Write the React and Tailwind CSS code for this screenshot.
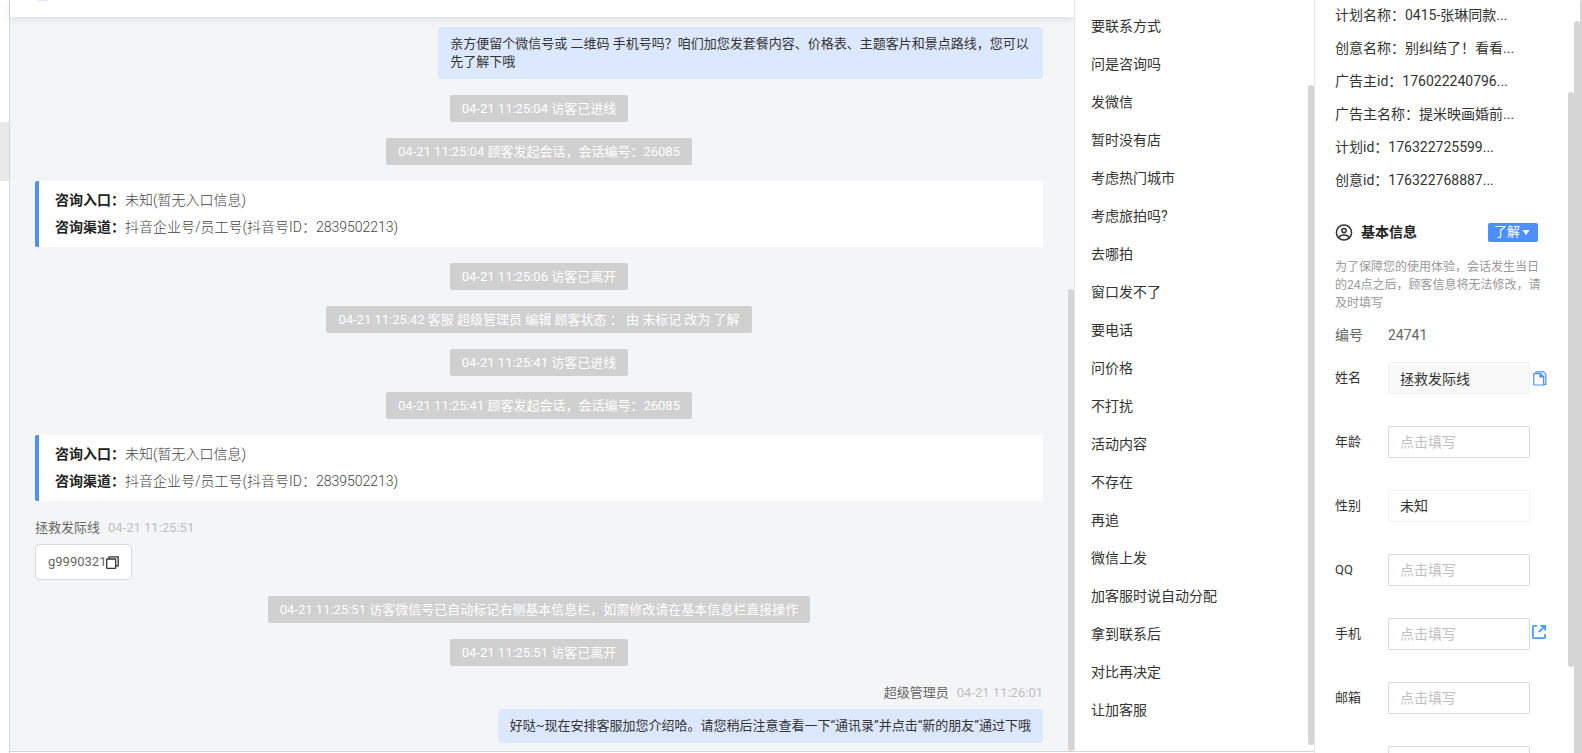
import React, { useState } from "react"

const messages = [
  {
    type: "reply",
    text: "亲方便留个微信号或 二维码 手机号吗？咱们加您发套餐内容、价格表、主题客片和景点路线，您可以先了解下哦",
  },
  { type: "system", text: "04-21 11:25:04 访客已进线" },
  { type: "system", text: "04-21 11:25:04 顾客发起会话，会话编号：26085" },
  { type: "source" },
  { type: "system", text: "04-21 11:25:06 访客已离开" },
  { type: "system", text: "04-21 11:25:42 客服 超级管理员 编辑 顾客状态 ： 由 未标记 改为 了解" },
  { type: "system", text: "04-21 11:25:41 访客已进线" },
  { type: "system", text: "04-21 11:25:41 顾客发起会话，会话编号：26085" },
  { type: "source" },
  { type: "visitor", name: "拯救发际线", time: "04-21 11:25:51", text: "g9990321" },
  {
    type: "system",
    text: "04-21 11:25:51 访客微信号已自动标记右侧基本信息栏，如需修改请在基本信息栏直接操作",
  },
  { type: "system", text: "04-21 11:25:51 访客已离开" },
  {
    type: "reply",
    name: "超级管理员",
    time: "04-21 11:26:01",
    text: "好哒~现在安排客服加您介绍哈。请您稍后注意查看一下“通讯录”并点击“新的朋友”通过下哦",
  },
]

const quickReplies = [
  "要联系方式",
  "问是咨询吗",
  "发微信",
  "暂时没有店",
  "考虑热门城市",
  "考虑旅拍吗?",
  "去哪拍",
  "窗口发不了",
  "要电话",
  "问价格",
  "不打扰",
  "活动内容",
  "不存在",
  "再追",
  "微信上发",
  "加客服时说自动分配",
  "拿到联系后",
  "对比再决定",
  "让加客服",
]

const adInfo = [
  ["计划名称", "0415-张琳同款..."],
  ["创意名称", "别纠结了！看看..."],
  ["广告主id", "176022240796..."],
  ["广告主名称", "提米映画婚前..."],
  ["计划id", "176322725599..."],
  ["创意id", "176322768887..."],
]

const fields = [
  { id: "name", label: "姓名", value: "拯救发际线", readOnly: true, action: "copy" },
  { id: "age", label: "年龄" },
  { id: "gender", label: "性别", options: ["未知", "男", "女"] },
  { id: "qq", label: "QQ" },
  { id: "phone", label: "手机", action: "open" },
  { id: "email", label: "邮箱" },
]

const CopyIcon = () => (
  <svg width="13" height="13" viewBox="0 0 13 13" fill="none" stroke="#333" strokeWidth="1.3">
    <rect x="0.7" y="3" width="9" height="9.3" rx="0.6" />
    <path d="M3 3V0.8h9.2v9H9.7" />
  </svg>
)

const DocCopyIcon = () => (
  <svg width="14" height="15" viewBox="0 0 14 15" fill="none" stroke="#4e8fff" strokeWidth="1.2">
    <path d="M0.8 2.6h6.4l3.4 3.2v8.2H0.8z" />
    <path d="M7 2.6v3.4h3.6z" fill="#4e8fff" />
    <path d="M3 2.4V0.8h7.4l2.4 2.4v10.2h-2.2" />
  </svg>
)

const OpenIcon = () => (
  <svg width="14" height="14" viewBox="0 0 14 14" fill="none" stroke="#409eff" strokeWidth="1.8">
    <path d="M5 0.9H1.9a1 1 0 0 0-1 1v10.2a1 1 0 0 0 1 1h10.2a1 1 0 0 0 1-1V9" />
    <path d="M8.5 0.9h4.6v4.6M13 1L6.8 7.2" />
  </svg>
)

const UserIcon = () => (
  <svg width="18" height="17" viewBox="0 0 18 17" fill="none" stroke="#333" strokeWidth="1.5">
    <circle cx="9" cy="8.5" r="7.6" />
    <circle cx="9" cy="6.6" r="2.1" />
    <path d="M3.8 13.6c1-1.9 2.9-2.5 5.2-2.5s4.2.6 5.2 2.5" />
  </svg>
)

const SystemMessage = ({ text }) => (
  <p className="self-center rounded-xs bg-[#d0d0d0] px-3 text-[13px] leading-[27px] text-white">{text}</p>
)

const SourceCard = () => (
  <div className="rounded-xs border-l-4 border-[#4e8fff] bg-white px-4 py-1.5 text-sm leading-[27px] text-[#444]">
    <p>
      <b className="font-bold text-[#222]">咨询入口：</b>
      <span className="font-light">未知(暂无入口信息)</span>
    </p>
    <p>
      <b className="font-bold text-[#222]">咨询渠道：</b>
      <span className="font-light">抖音企业号/员工号(抖音号ID：2839502213)</span>
    </p>
  </div>
)

const Sender = ({ name, time }) => (
  <p className="mb-[5px] flex gap-2 text-[13px] leading-[22px]">
    <span className="text-[#666]">{name}</span>
    <time className="text-[#bfbfbf]">{time}</time>
  </p>
)

const Message = ({ message }) => {
  if (message.type === "system") return <SystemMessage text={message.text} />
  if (message.type === "source") return <SourceCard />
  if (message.type === "visitor") {
    return (
      <div className="flex flex-col items-start">
        <Sender name={message.name} time={message.time} />
        <div className="flex items-center rounded border border-[#d9d9d9] bg-white px-3 py-2 text-[13px] leading-[18px] text-[#666]">
          {message.text}
          <button type="button" aria-label="复制">
            <CopyIcon />
          </button>
        </div>
      </div>
    )
  }
  return (
    <div className="flex flex-col items-end">
      {message.name && <Sender name={message.name} time={message.time} />}
      <p className="max-w-3/5 rounded bg-[#dce8ff] px-3 py-2 text-[13px] leading-[18px] text-[#333]">{message.text}</p>
    </div>
  )
}

const Field = ({ field }) => {
  const [value, setValue] = useState(field.value || "")
  return (
    <div className="flex items-center">
      <label htmlFor={field.id} className="w-[53px] shrink-0 text-[13px] text-[#333]">
        {field.label}
      </label>
      {field.options ? (
        <select
          id={field.id}
          className="h-8 w-[142px] appearance-none rounded-xs border border-[#f2f2f2] bg-white px-[11px] text-sm text-[#333]"
        >
          {field.options.map((option) => (
            <option key={option}>{option}</option>
          ))}
        </select>
      ) : (
        <input
          id={field.id}
          value={value}
          readOnly={field.readOnly}
          placeholder="点击填写"
          onChange={(e) => setValue(e.target.value)}
          className={`h-8 w-[142px] rounded-xs border px-[11px] text-sm text-[#333] placeholder:text-[#bfbfbf] ${
            field.readOnly ? "border-[#f2f2f2] bg-[#f9f9f9]" : "border-[#d9d9d9] bg-white"
          }`}
        />
      )}
      {field.action === "copy" && (
        <button type="button" aria-label="复制姓名" className="ml-[3px]">
          <DocCopyIcon />
        </button>
      )}
      {field.action === "open" && (
        <button type="button" aria-label="打开手机" className="mb-1 ml-0.5">
          <OpenIcon />
        </button>
      )}
    </div>
  )
}

const ChatPanel = () => (
  <main className="relative flex min-w-0 flex-1 flex-col bg-[#f3f5f7]">
    <header className="h-[17px] shrink-0 bg-white pl-7 shadow-[0_2px_8px_rgba(0,0,0,0.1)]">
      <div className="h-px w-2.5 bg-[#dce8ff]" />
    </header>
    <div className="flex flex-1 flex-col gap-4 pt-2.5 pr-[31px] pb-2 pl-[25px]">
      {messages.map((message, index) => (
        <Message key={index} message={message} />
      ))}
    </div>
    <div className="absolute right-0 bottom-0 h-[462px] w-1.5 rounded-full bg-[#d5d5d5]" />
  </main>
)

const QuickReplies = () => (
  <aside className="relative w-[240px] shrink-0 border-l border-[#e5e5e5] bg-white pt-[7px]">
    <ul>
      {quickReplies.map((reply) => (
        <li key={reply}>
          <button type="button" className="block w-full px-4 text-left text-sm leading-[38px] text-[#333]">
            {reply}
          </button>
        </li>
      ))}
    </ul>
    <div className="absolute right-0 bottom-1.5 h-[660px] w-1.5 rounded-full bg-[#d5d5d5]" />
  </aside>
)

const CustomerPanel = () => (
  <aside className="relative h-screen w-[260px] shrink-0 overflow-hidden border-l border-[#e5e5e5] bg-white pl-5">
    <dl className="-mt-px text-sm leading-[33px] text-[#333]">
      {adInfo.map(([label, value]) => (
        <div key={label} className="flex">
          <dt>{label}：</dt>
          <dd>{value}</dd>
        </div>
      ))}
    </dl>
    <div className="mt-[25px] flex w-[203px] items-center gap-2">
      <UserIcon />
      <h2 className="text-sm font-bold text-[#222]">基本信息</h2>
      <button
        type="button"
        className="ml-auto flex h-[19px] items-center gap-0.5 rounded-xs bg-[#4e8fff] pr-2 pl-1.5 text-[13px] text-white"
      >
        了解
        <svg width="8" height="5" viewBox="0 0 8 5" fill="currentColor">
          <path d="M0.5 0h7L4 5z" />
        </svg>
      </button>
    </div>
    <p className="mt-4 w-[208px] text-xs leading-[18px] text-[#999]">
      为了保障您的使用体验，会话发生当日的24点之后，顾客信息将无法修改，请及时填写
    </p>
    <p className="mt-3 flex text-sm leading-[22px] text-[#666]">
      <span className="w-[53px]">编号</span>
      <span>24741</span>
    </p>
    <form className="mt-4 flex flex-col gap-8">
      {fields.map((field) => (
        <Field key={field.id} field={field} />
      ))}
      <input
        aria-label="地址"
        className="ml-[53px] h-8 w-[142px] shrink-0 rounded-xs border border-[#d9d9d9] px-[11px] text-sm text-[#333]"
      />
    </form>
    <div className="absolute top-[92px] right-0 h-[575px] w-1.5 rounded-full bg-[#d5d5d5]" />
  </aside>
)

const App = () => {
  return (
    <div className="flex h-screen overflow-hidden bg-white font-['Roboto','Noto_Sans_CJK_SC',sans-serif]">
      <div className="w-[9px] shrink-0 pt-[122px]">
        <div className="h-[59px] bg-[#e8e8e8]" />
      </div>
      <div className="min-w-0 flex-1 border-l border-[#d5d5d5] pb-px">
        <div className="flex h-full border-b border-[#d5d5d5]">
          <ChatPanel />
          <QuickReplies />
        </div>
      </div>
      <CustomerPanel />
      {/* page scrollbars */}
      <div className="flex w-2 shrink-0">
        <div className="mt-[21px] w-1.5 rounded-t-full bg-[#d5d5d5]" />
        <div className="w-0.5 rounded-tl-sm bg-[#d5d5d5]" />
      </div>
    </div>
  )
}

export default App
